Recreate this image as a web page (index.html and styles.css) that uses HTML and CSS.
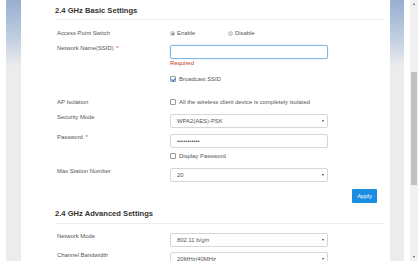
FILE: index.html
```
<!DOCTYPE html>
<html lang="en">
<head>
    <meta charset="UTF-8">
    <title>2.4 GHz Settings</title>
    <link rel="stylesheet" href="styles.css">
</head>
<body>

<div class="frame">
    <div class="gutter"></div>
    <div class="strip"></div>

    <div class="main">
        <div class="title first">2.4 GHz Basic Settings</div>

        <div class="row line r-switch">
            <div class="label">Access Point Switch</div>
            <div class="control radios">
                <span class="radio-item"><span class="radio checked"></span>Enable</span>
                <span class="radio-item"><span class="radio"></span>Disable</span>
            </div>
        </div>

        <div class="row r-ssid">
            <div class="label">Network Name(SSID) <span class="star">*</span></div>
            <div class="control">
                <input type="text" class="field focus" value="">
                <div class="error">Required</div>
            </div>
        </div>

        <div class="row line r-broadcast">
            <div class="label"></div>
            <div class="control"><span class="check checked"></span>Broadcast SSID</div>
        </div>

        <div class="row line r-isolation">
            <div class="label">AP Isolation</div>
            <div class="control"><span class="check"></span>All the wireless client device is completely isolated</div>
        </div>

        <div class="row r-security">
            <div class="label">Security Mode</div>
            <div class="control">
                <div class="select">WPA2(AES)-PSK</div>
            </div>
        </div>

        <div class="row r-password">
            <div class="label">Password <span class="star">*</span></div>
            <div class="control">
                <input type="password" class="field" value="12345678901">
            </div>
        </div>

        <div class="row line r-display">
            <div class="label"></div>
            <div class="control"><span class="check"></span>Display Password</div>
        </div>

        <div class="row r-station">
            <div class="label">Max Station Number</div>
            <div class="control">
                <div class="select">20</div>
            </div>
        </div>

        <div class="actions">
            <button class="apply">Apply</button>
        </div>

        <div class="title second">2.4 GHz Advanced Settings</div>

        <div class="row r-mode">
            <div class="label">Network Mode</div>
            <div class="control">
                <div class="select">802.11 b/g/n</div>
            </div>
        </div>

        <div class="row r-bandwidth">
            <div class="label">Channel Bandwidth</div>
            <div class="control">
                <div class="select">20MHz/40MHz</div>
            </div>
        </div>
    </div>

    <div class="strip right"></div>
    <div class="gap"></div>

    <div class="scrollbar">
        <div class="arrow up"></div>
        <div class="track"><div class="thumb"></div></div>
        <div class="arrow down"></div>
    </div>
</div>

</body>
</html>
```

FILE: styles.css
```
html, body {
    margin: 0;
    padding: 0;
    width: 418px;
    height: 261px;
    overflow: hidden;
    background-color: #ffffff;
    font-family: "Liberation Sans", Arial, sans-serif;
}
.frame {
    display: flex;
    height: 261px;
}
.gutter {
    width: 6px;
    flex: none;
}
.strip {
    width: 15px;
    flex: none;
    background: linear-gradient(to bottom, #97afd1 0px, #c3d0e2 40px, #ececec 66px, #ececec 100%);
}
.strip.right {
    width: 14px;
}
.gap {
    width: 6px;
    flex: none;
}
.main {
    width: 369px;
    flex: none;
    padding: 0 5px 0 34px;
    box-sizing: border-box;
    background-color: #ffffff;
}
.title {
    font-size: 7.6px;
    font-weight: bold;
    color: #333333;
    line-height: 10px;
    padding-bottom: 3px;
    border-bottom: 1px solid #eeeeee;
}
.title.first {
    padding-top: 6px;
}
.title.second {
    padding-top: 6px;
    padding-bottom: 4px;
}
.row {
    display: flex;
    font-size: 5.9px;
    color: #555555;
}
.label {
    width: 115px;
    padding-left: 2px;
    box-sizing: border-box;
    line-height: 7px;
}
.control {
    width: 158px;
}
.row.line {
    align-items: center;
    height: 14px;
}
.row.line .label,
.row.line .control {
    display: flex;
    align-items: center;
}
.star {
    color: #e04040;
    margin-left: 1px;
}
.r-switch { margin-top: 6px; }
.r-ssid { margin-top: 5px; }
.r-broadcast { margin-top: 5px; }
.r-isolation { margin-top: 9px; }
.r-security { margin-top: 5px; }
.r-password { margin-top: 6px; }
.r-display { margin-top: 1px; height: 13px !important; }
.r-station { margin-top: 6px; }
.r-mode { margin-top: 9px; }
.r-bandwidth { margin-top: 5px; }

.radios .radio-item {
    display: flex;
    align-items: center;
    width: 58px;
}
.radio {
    width: 5px;
    height: 5px;
    border-radius: 50%;
    background-color: #dddddd;
    border: 0.5px solid #c4c4c4;
    box-sizing: border-box;
    margin-right: 2px;
    position: relative;
}
.radio.checked::after {
    content: "";
    position: absolute;
    left: 1px;
    top: 1px;
    width: 2.2px;
    height: 2.2px;
    border-radius: 50%;
    background-color: #707070;
}
.field {
    display: block;
    width: 158px;
    height: 14px;
    margin: 0;
    padding: 0 6px;
    box-sizing: border-box;
    border: 1px solid #d6d6d6;
    border-radius: 2px;
    font-family: "Liberation Sans", Arial, sans-serif;
    font-size: 5.9px;
    color: #555555;
    outline: none;
    background-color: #ffffff;
}
.field.focus {
    border-color: #7fb6e9;
    box-shadow: 0 0 1.5px #b5d6f5;
}
.error {
    color: #c0392b;
    line-height: 8px;
    height: 8px;
}
.check {
    width: 6px;
    height: 6px;
    border: 1px solid #9a9a9a;
    border-radius: 1px;
    box-sizing: border-box;
    margin-right: 3px;
    position: relative;
    background-color: #ffffff;
}
.check.checked::after {
    content: "";
    position: absolute;
    left: 1.2px;
    top: 0.1px;
    width: 1.6px;
    height: 3px;
    border-right: 1px solid #2f78c9;
    border-bottom: 1px solid #2f78c9;
    transform: rotate(40deg);
}
.select {
    position: relative;
    height: 14px;
    line-height: 12px;
    padding: 0 6px;
    box-sizing: border-box;
    border: 1px solid #d6d6d6;
    border-radius: 2px;
    color: #555555;
    background-color: #ffffff;
}
.select::after {
    content: "";
    position: absolute;
    right: 3px;
    top: 5px;
    border-left: 1.3px solid transparent;
    border-right: 1.3px solid transparent;
    border-top: 2px solid #444444;
}
.actions {
    display: flex;
    justify-content: flex-end;
    margin-top: 7px;
    padding-right: 8px;
}
.apply {
    width: 25px;
    height: 14px;
    padding: 0;
    margin: 0;
    border: none;
    border-radius: 1px;
    background-color: #1b8de0;
    color: #ffffff;
    font-family: "Liberation Sans", Arial, sans-serif;
    font-size: 5.9px;
}
.scrollbar {
    width: 8px;
    flex: none;
    display: flex;
    flex-direction: column;
    background-color: #f1f1f1;
}
.arrow {
    height: 8px;
    display: flex;
    align-items: center;
    justify-content: center;
}
.arrow.up::before {
    content: "";
    border-left: 1.5px solid transparent;
    border-right: 1.5px solid transparent;
    border-bottom: 2px solid #505050;
}
.arrow.down::before {
    content: "";
    border-left: 1.5px solid transparent;
    border-right: 1.5px solid transparent;
    border-top: 2px solid #505050;
}
.track {
    flex: 1;
    padding-top: 64px;
    display: flex;
    justify-content: center;
}
.thumb {
    width: 6px;
    height: 113px;
    background-color: #c1c1c1;
}
```
